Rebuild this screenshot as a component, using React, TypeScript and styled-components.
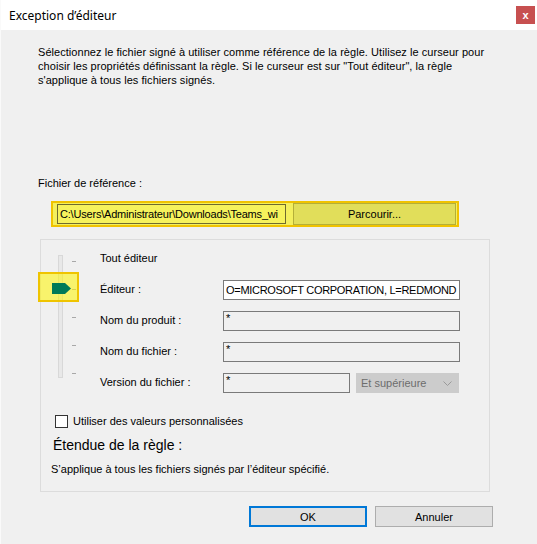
import React from 'react'
import styled, { createGlobalStyle } from 'styled-components'

const GlobalStyle = createGlobalStyle`
  html, body {
    margin: 0;
    padding: 0;
    background: #ffffff;
  }
  body {
    font-family: "Liberation Sans", Arial, sans-serif;
    font-size: 11px;
    color: #000;
  }
`

const Window = styled.div`
  width: 537px;
  height: 544px;
  box-sizing: border-box;
  display: flex;
  flex-direction: column;
  background: #f0f0f0;
  border-left: 1px solid #fafafa;
  overflow: hidden;
`

const TitleBar = styled.div`
  height: 30px;
  flex: none;
  background: #fff;
  display: flex;
  align-items: center;
  justify-content: space-between;
  padding: 0 2px 0 8px;
`

const Title = styled.span`
  font-family: "Noto Sans", "Open Sans", sans-serif;
  font-size: 12px;
  color: #000;
`

const CloseButton = styled.div`
  width: 19px;
  height: 18px;
  background: #c75050;
  color: #fff;
  font: bold 11px "Liberation Sans", Arial, sans-serif;
  display: flex;
  align-items: center;
  justify-content: center;
  padding-bottom: 1px;
  box-sizing: border-box;
`

const Body = styled.div`
  flex: 1;
  display: flex;
  flex-direction: column;
  padding: 15px 0 0 37px;
`

const Intro = styled.p`
  margin: 0;
  line-height: 14px;
  letter-spacing: 0.05px;
`

const FieldCaption = styled.div`
  margin-top: 89px;
  line-height: 14px;
`

const RefBox = styled.div`
  margin: 11px 0 0 13px;
  width: 408px;
  height: 26px;
  box-sizing: border-box;
  border: 2px solid #f0c300;
  background: #f3ef5e;
  display: flex;
  align-items: center;
  gap: 7px;
  padding: 0 1px 0 4px;
`

const PathField = styled.div`
  width: 229px;
  height: 20px;
  box-sizing: border-box;
  border: 1px solid #6f6a2e;
  background: #f6f25c;
  line-height: 18px;
  padding-left: 2px;
  letter-spacing: -0.2px;
  white-space: nowrap;
  overflow: hidden;
`

const BrowseButton = styled.div`
  width: 163px;
  height: 22px;
  box-sizing: border-box;
  border: 1px solid #b4af38;
  background: #e1de5a;
  display: flex;
  align-items: center;
  justify-content: center;
`

const Group = styled.div`
  margin: 12px 0 0 2px;
  width: 450px;
  height: 253px;
  box-sizing: border-box;
  border: 1px solid #dcdcdc;
  display: flex;
  flex-direction: column;
  padding-top: 9px;
`

const Criteria = styled.div`
  display: flex;
`

const SliderCol = styled.div`
  position: relative;
  width: 59px;
  flex: none;
  display: flex;
  align-items: flex-start;
  padding: 6px 0 0 17px;
  box-sizing: border-box;
`

const Track = styled.div`
  width: 5px;
  height: 123px;
  box-sizing: border-box;
  border: 1px solid #d8d8d8;
  background: #e8e8e8;
`

const Ticks = styled.div`
  margin: 6px 0 0 9px;
  height: 113px;
  display: flex;
  flex-direction: column;
  justify-content: space-between;
`

const Tick = styled.div`
  width: 4px;
  height: 1px;
  background: #a8a8a8;
`

const Highlight = styled.div`
  position: absolute;
  left: -3px;
  top: 23px;
  width: 41px;
  height: 30px;
  box-sizing: border-box;
  border: 2px solid #efc400;
  background: rgba(255, 246, 0, 0.55);
`

const Thumb = styled.svg`
  position: absolute;
  left: 11px;
  top: 34px;
`

const Form = styled.div`
  display: grid;
  grid-template-columns: 123px 237px;
  grid-auto-rows: 20px;
  row-gap: 11px;
  align-items: center;
`

const Label = styled.div`
  line-height: 14px;
  margin-top: -2px;
`

const Field = styled.div<{ $editable?: boolean; $width?: number }>`
  width: ${p => (p.$width ? `${p.$width}px` : '100%')};
  height: 20px;
  box-sizing: border-box;
  border: 1px solid #7a7a7a;
  background: ${p => (p.$editable ? '#ffffff' : '#f0f0f0')};
  line-height: 18px;
  padding: 0 2px;
  letter-spacing: ${p => (p.$editable ? '-0.3px' : '0')};
  white-space: nowrap;
  overflow: hidden;
`

const Star = styled.span`
  position: relative;
  top: -3px;
`

const VersionRow = styled.div`
  display: flex;
  gap: 6px;
`

const Select = styled.div`
  width: 103px;
  height: 20px;
  box-sizing: border-box;
  background: #cccccc;
  border: 1px solid #cccccc;
  color: #6d6d6d;
  display: flex;
  align-items: center;
  justify-content: space-between;
  padding: 0 6px 0 4px;
`

const CheckRow = styled.div`
  margin: 22px 0 0 14px;
  display: flex;
  align-items: center;
  gap: 5px;
  line-height: 13px;
`

const CheckBox = styled.div`
  width: 13px;
  height: 13px;
  box-sizing: border-box;
  border: 1px solid #333;
  background: #fff;
`

const ScopeTitle = styled.div`
  margin: 8px 0 0 12px;
  font-size: 14px;
  line-height: 18px;
`

const ScopeText = styled.div`
  margin: 8px 0 0 10px;
  line-height: 14px;
`

const ButtonRow = styled.div`
  margin-top: 14px;
  display: flex;
  justify-content: flex-end;
  gap: 8px;
  padding-right: 44px;
`

const DialogButton = styled.div<{ $primary?: boolean }>`
  width: 118px;
  height: 21px;
  box-sizing: border-box;
  background: #e1e1e1;
  border: ${p => (p.$primary ? '2px solid #0078d7' : '1px solid #adadad')};
  display: flex;
  align-items: center;
  justify-content: center;
`

export default function App() {
  return (
    <>
      <GlobalStyle />
      <Window>
        <TitleBar>
          <Title>Exception d’éditeur</Title>
          <CloseButton>x</CloseButton>
        </TitleBar>
        <Body>
          <Intro>
            Sélectionnez le fichier signé à utiliser comme référence de la règle. Utilisez le curseur pour
            <br />
            choisir les propriétés définissant la règle. Si le curseur est sur "Tout éditeur", la règle
            <br />
            s'applique à tous les fichiers signés.
          </Intro>

          <FieldCaption>Fichier de référence :</FieldCaption>
          <RefBox>
            <PathField>C:\Users\Administrateur\Downloads\Teams_wi</PathField>
            <BrowseButton>Parcourir...</BrowseButton>
          </RefBox>

          <Group>
            <Criteria>
              <SliderCol>
                <Track />
                <Ticks>
                  {[0, 1, 2, 3, 4].map(i => (
                    <Tick key={i} />
                  ))}
                </Ticks>
                <Highlight />
                <Thumb width="19" height="11" viewBox="0 0 19 11">
                  <polygon points="0,0 13,0 19,5.5 13,11 0,11" fill="#007a58" />
                </Thumb>
              </SliderCol>
              <Form>
                <Label>Tout éditeur</Label>
                <div />
                <Label>Éditeur :</Label>
                <Field $editable>O=MICROSOFT CORPORATION, L=REDMOND</Field>
                <Label>Nom du produit :</Label>
                <Field><Star>*</Star></Field>
                <Label>Nom du fichier :</Label>
                <Field><Star>*</Star></Field>
                <Label>Version du fichier :</Label>
                <VersionRow>
                  <Field $width={127}><Star>*</Star></Field>
                  <Select>
                    <span>Et supérieure</span>
                    <svg width="9" height="5" viewBox="0 0 9 5">
                      <polyline points="0.5,0.5 4.5,4.5 8.5,0.5" fill="none" stroke="#9a9a9a" strokeWidth="1" />
                    </svg>
                  </Select>
                </VersionRow>
              </Form>
            </Criteria>

            <CheckRow>
              <CheckBox />
              <span>Utiliser des valeurs personnalisées</span>
            </CheckRow>
            <ScopeTitle>Étendue de la règle :</ScopeTitle>
            <ScopeText>S’applique à tous les fichiers signés par l’éditeur spécifié.</ScopeText>
          </Group>

          <ButtonRow>
            <DialogButton $primary>OK</DialogButton>
            <DialogButton>Annuler</DialogButton>
          </ButtonRow>
        </Body>
      </Window>
    </>
  )
}
